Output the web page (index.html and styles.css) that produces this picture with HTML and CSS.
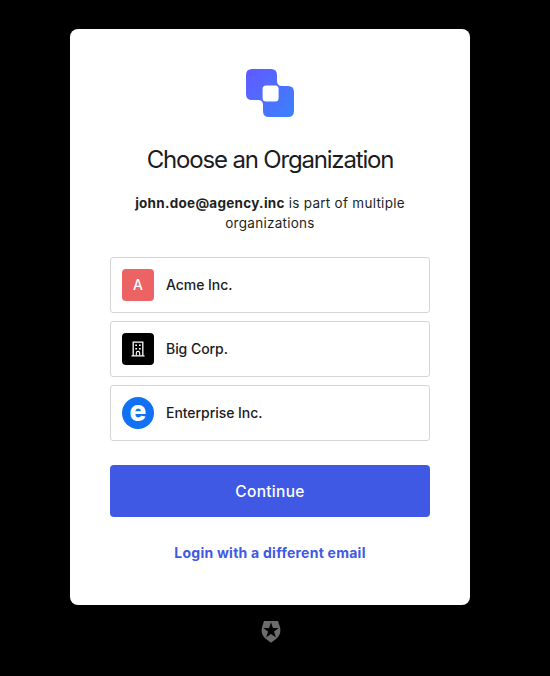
FILE: index.html
```html
<!DOCTYPE html>
<html lang="en">
<head>
<meta charset="utf-8">
<title>Choose an Organization</title>
<link rel="stylesheet" href="styles.css">
</head>
<body>
<main class="card">
  <svg class="logo" width="48" height="48" viewBox="0 0 48 48" aria-hidden="true">
    <defs>
      <linearGradient id="brand" x1="0" y1="0" x2="1" y2="1">
        <stop offset="0" stop-color="#6259ff"/>
        <stop offset="1" stop-color="#3b82ff"/>
      </linearGradient>
    </defs>
    <path fill="url(#brand)" d="M6 0H25Q31 0 31 6V12Q31 17 36 17H42Q48 17 48 23V42Q48 48 42 48H23Q17 48 17 42V36Q17 31 12 31H6Q0 31 0 25V6Q0 0 6 0Z"/>
    <rect x="16.6" y="16.6" width="16" height="16" rx="3.5" fill="#fff"/>
  </svg>
  <h1 class="title">Choose an Organization</h1>
  <p class="intro"><strong>john.doe@agency.inc</strong> is part of multiple organizations</p>
  <ul class="orgs">
    <li class="org"><span class="avatar avatar-acme">A</span><span class="name">Acme Inc.</span></li>
    <li class="org">
      <span class="avatar avatar-big">
        <svg width="16" height="16" viewBox="0 0 16 16" fill="none" stroke="#fff" aria-hidden="true">
          <path stroke-width="1.3" d="M3.2 14.5V1.2H12.8V14.5M1.5 14.8H14.5"/>
          <path stroke-width="1.1" d="M6.3 14.5V12Q6.3 10.4 8 10.4Q9.7 10.4 9.7 12V14.5"/>
          <path stroke-width="1.5" d="M5.3 4.3H7M9 4.3H10.7M5.3 7.7H7M9 7.7H10.7"/>
        </svg>
      </span>
      <span class="name">Big Corp.</span>
    </li>
    <li class="org"><span class="avatar avatar-enterprise"><span class="letter">e</span></span><span class="name">Enterprise Inc.</span></li>
  </ul>
  <button class="continue" type="button">Continue</button>
  <a class="other" href="#">Login with a different email</a>
</main>
<svg class="badge" width="20" height="22" viewBox="0 0 20 22" aria-hidden="true">
  <path fill="#6c6c6c" fill-rule="evenodd" d="M3 0H17L18.7 5.2C20.5 11 18.7 15.2 15 18L10 21.8L5 18C1.3 15.2-.5 11 1.3 5.2ZM10 1.2L8.1 7H2.3L7 10.5L5.2 16.3L10 12.9L14.8 16.3L13 10.5L17.7 7H11.9Z"/>
</svg>
</body>
</html>
```
FILE: styles.css
```css
* { box-sizing: border-box; }

body {
  margin: 0;
  min-height: 676px;
  padding: 29px 10px 0 0;
  display: flex;
  flex-direction: column;
  align-items: center;
  background: #000;
  color: #1e212a;
  font-family: Inter, "Liberation Sans", sans-serif;
  font-size: 14px;
}

.card {
  width: 400px;
  height: 576px;
  padding: 40px;
  display: flex;
  flex-direction: column;
  align-items: center;
  background: #fff;
  border-radius: 8px;
}

.logo { flex: none; }

.title {
  margin: 28px 0 0;
  font-size: 24px;
  line-height: 30px;
  font-weight: 400;
  letter-spacing: -1.18px;
  color: #1b1c1e;
  white-space: nowrap;
}

.intro {
  margin: 18px 0 0;
  width: 300px;
  font-size: 13.5px;
  line-height: 20px;
  letter-spacing: 0.27px;
  text-align: center;
  color: #1e1f22;
}

.intro strong { font-weight: 700; }

.orgs {
  width: 100%;
  margin: 24px 0 0;
  padding: 0;
  display: grid;
  gap: 8px;
  list-style: none;
}

.org {
  height: 56px;
  padding: 0 11px;
  display: flex;
  align-items: center;
  gap: 12px;
  border: 1px solid #d3d4d6;
  border-radius: 3px;
  font-weight: 500;
  color: #1b1c1e;
}

.name {
  padding-bottom: 2px;
  letter-spacing: -0.05px;
}

.avatar {
  width: 32px;
  height: 32px;
  display: flex;
  align-items: center;
  justify-content: center;
  border-radius: 4px;
  color: #fff;
}

.avatar-acme {
  padding-bottom: 1px;
  background: #eb6363;
}

.avatar-big { background: #000; }

.avatar-enterprise {
  border-radius: 50%;
  background: #1171f5;
  font-size: 28px;
  line-height: 32px;
  font-weight: 800;
}

.letter { margin-top: -4px; }

.continue {
  width: 100%;
  height: 52px;
  margin-top: 24px;
  border: 0;
  border-radius: 4px;
  background: #3f59e4;
  color: #fff;
  font: 500 15.5px Inter, "Liberation Sans", sans-serif;
  letter-spacing: 0.3px;
}

.other {
  margin-top: 26px;
  font-size: 14px;
  line-height: 20px;
  font-weight: 700;
  letter-spacing: 0.25px;
  color: #3f59e4;
  text-decoration: none;
}

.badge {
  margin: 16px 0 0 1px;
  flex: none;
}
```
